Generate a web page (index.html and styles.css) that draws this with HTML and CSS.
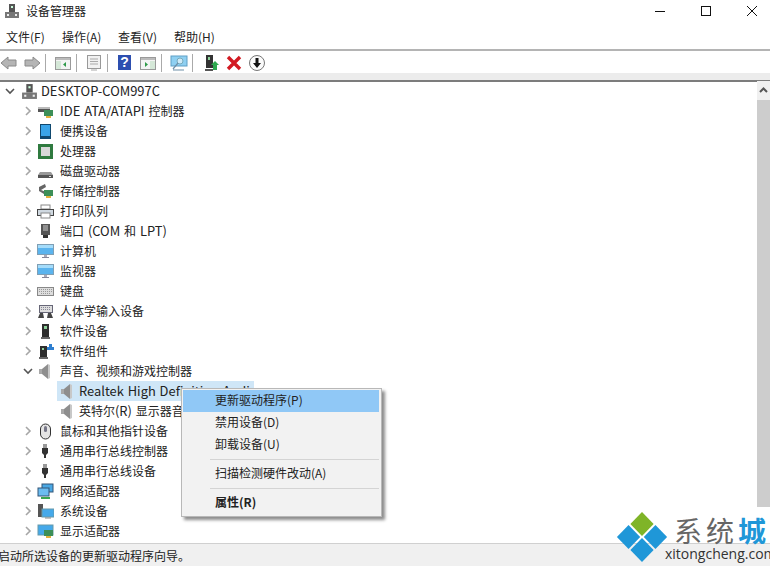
FILE: index.html
```html
<!DOCTYPE html>
<html lang="zh-CN">
<head>
<meta charset="utf-8">
<title>设备管理器</title>
<link rel="stylesheet" href="styles.css">
</head>
<body>
<svg width="0" height="0" class="defs">
  <defs>
    <g id="pc"><rect x="5" y="1" width="6" height="8" fill="#555"/><rect x="7" y="3" width="2" height="2" fill="#cfd"/><rect x="1" y="9" width="14" height="6" fill="#777"/><rect x="3" y="11" width="2" height="2" fill="#eee"/><rect x="11" y="11" width="2" height="2" fill="#eee"/></g>
    <g id="arrow"><path d="M6 4l4 4-4 4" fill="none" stroke="#a6a6a6" stroke-width="1.600"/></g>
    <g id="down"><path d="M4 6l4 4 4-4" fill="none" stroke="#555" stroke-width="1.600"/></g>
    <g id="spk"><path d="M2 6h3v5H2z" fill="#a8a8a8"/><path d="M5 6l6-5v15l-6-5z" fill="#8e8e8e"/><path d="M11 1v15l2-1V2z" fill="#c8c8c8"/></g>
    <g id="mon"><rect x="0.500" y="1.500" width="16" height="10" fill="#5bb4ee" stroke="#7f9fb5"/><rect x="1" y="2" width="15" height="3" fill="#a5dcfa"/><path d="M5 14h7v1H5z" fill="#889"/><path d="M7 12h3v2H7z" fill="#aab"/></g>
    <g id="usb"><path d="M6 1h4v4H6z" fill="#999"/><path d="M5 5h6v5l-2 2v3H7v-3l-2-2z" fill="#333"/></g>
    <g id="card"><rect x="7" y="7" width="9" height="6" fill="#3d8f58"/><rect x="9" y="13" width="5" height="2" fill="#e3b23c"/></g>
  </defs>
</svg>
<div class="window">
  <header class="titlebar">
    <svg class="title-icon" width="16" height="16" viewBox="0 0 16 16"><use href="#pc"/></svg>
    <span class="title-text">设备管理器</span>
    <div class="win-controls">
      <svg width="12" height="12" viewBox="0 0 12 12"><path d="M1 6.500h10" stroke="#111" stroke-width="1"/></svg>
      <svg width="12" height="12" viewBox="0 0 12 12"><rect x="1.500" y="1.500" width="9" height="9" fill="none" stroke="#111"/></svg>
      <svg width="12" height="12" viewBox="0 0 12 12"><path d="M1 1l10 10M11 1L1 11" stroke="#111"/></svg>
    </div>
  </header>
  <nav class="menubar">
    <span class="menu-item">文件(F)</span><span class="menu-item">操作(A)</span><span class="menu-item">查看(V)</span><span class="menu-item">帮助(H)</span>
  </nav>
  <div class="toolbar">
    <svg width="18" height="18" viewBox="0 0 18 18"><path d="M1 9l7-6v3h8v6H8v3z" fill="#b5b5b5" stroke="#8a8a8a"/></svg>
    <svg class="tb-next" width="18" height="18" viewBox="0 0 18 18"><path d="M17 9l-7-6v3H2v6h8v3z" fill="#b5b5b5" stroke="#8a8a8a"/></svg>
    <i class="sep"></i>
    <svg width="18" height="18" viewBox="0 0 18 18"><rect x="1.500" y="3.500" width="15" height="12" fill="#f4f4f4" stroke="#9a9a9a"/><path d="M2 4h14v2H2z" fill="#bbb"/><path d="M2 7h5v8H2z" fill="#d5e8d8"/><path d="M12 8v5l-3-2.500z" fill="#2f9a4a"/></svg>
    <i class="sep"></i>
    <svg width="18" height="18" viewBox="0 0 18 18"><rect x="2.500" y="1.500" width="13" height="13" fill="#f2f2f2" stroke="#999"/><path d="M5 5h8M5 7.500h8M5 10h8" stroke="#aaa"/><path d="M6 16h6" stroke="#aaa"/></svg>
    <i class="sep"></i>
    <svg width="18" height="18" viewBox="0 0 18 18"><rect x="2" y="1" width="13" height="15" fill="#2d4fb0"/><text x="8.500" y="13" class="q">?</text></svg>
    <svg class="tb-next" width="18" height="18" viewBox="0 0 18 18"><rect x="1.500" y="3.500" width="15" height="12" fill="#f4f4f4" stroke="#9a9a9a"/><path d="M2 4h14v2H2z" fill="#bbb"/><path d="M11 7h5v8h-5z" fill="#d5e8d8"/><path d="M6 8v5l3-2.500z" fill="#2f9a4a"/></svg>
    <i class="sep"></i>
    <svg width="18" height="18" viewBox="0 0 18 18"><rect x="1" y="2" width="16" height="10" fill="#8fd0f2" stroke="#5f9fc5"/><circle cx="10" cy="7" r="3" fill="#cfeaf8" stroke="#7ab"/><path d="M8 9l-5 6M3 16h11" stroke="#6f8fa8" stroke-width="1.200"/></svg>
    <i class="sep sep-wide"></i>
    <svg width="18" height="18" viewBox="0 0 18 18"><rect x="4" y="1" width="7" height="13" fill="#333"/><rect x="6" y="3" width="2" height="3" fill="#8ed19a"/><path d="M3 15h8v2H3z" fill="#555"/><path d="M13 7l4 4h-2v5h-4v-5H9z" fill="#2ea84f"/></svg>
    <svg class="tb-next" width="18" height="18" viewBox="0 0 18 18"><path d="M3 3l12 12M15 3L3 15" stroke="#d21a22" stroke-width="3.400"/></svg>
    <svg class="tb-next" width="18" height="18" viewBox="0 0 18 18"><circle cx="9" cy="9" r="7.500" fill="#fafafa" stroke="#777"/><path d="M7.500 4h3v5h2.500L9 14 5 9h2.500z" fill="#111"/></svg>
  </div>
  <div class="band"></div>
  <main class="content">
    <div class="tree">
      <div class="row root"><svg class="tw" viewBox="0 0 16 16"><use href="#down"/></svg><svg class="ic" viewBox="0 0 16 16"><use href="#pc"/></svg><span class="lat">DESKTOP-COM997C</span></div>
      <div class="row"><svg class="tw" viewBox="0 0 16 16"><use href="#arrow"/></svg><svg class="ic" viewBox="0 0 17 17"><rect x="1" y="4" width="12" height="5" fill="#555"/><rect x="1" y="4" width="12" height="2" fill="#bbb"/><use href="#card"/></svg><span><span class="lat">IDE ATA/ATAPI </span>控制器</span></div>
      <div class="row"><svg class="tw" viewBox="0 0 16 16"><use href="#arrow"/></svg><svg class="ic" viewBox="0 0 17 17"><rect x="3" y="1" width="11" height="15" fill="#10486e"/><rect x="4" y="2" width="9" height="11" fill="#3aa4e8"/></svg><span>便携设备</span></div>
      <div class="row"><svg class="tw" viewBox="0 0 16 16"><use href="#arrow"/></svg><svg class="ic" viewBox="0 0 17 17"><rect x="1" y="1" width="15" height="15" fill="#2f7a3f"/><rect x="4" y="4" width="9" height="9" fill="#d8d8d8"/></svg><span>处理器</span></div>
      <div class="row"><svg class="tw" viewBox="0 0 16 16"><use href="#arrow"/></svg><svg class="ic" viewBox="0 0 17 17"><path d="M3 9h11l2 3v3H1v-3z" fill="#999"/><rect x="1" y="12" width="15" height="3" fill="#555"/><rect x="12" y="13" width="2" height="1" fill="#ddd"/></svg><span>磁盘驱动器</span></div>
      <div class="row"><svg class="tw" viewBox="0 0 16 16"><use href="#arrow"/></svg><svg class="ic" viewBox="0 0 17 17"><path d="M2 4l6-3 1 3-5 3 5 2-2 2-5-3z" fill="#666"/><use href="#card"/></svg><span>存储控制器</span></div>
      <div class="row"><svg class="tw" viewBox="0 0 16 16"><use href="#arrow"/></svg><svg class="ic" viewBox="0 0 17 17"><rect x="4" y="2" width="9" height="4" fill="#fff" stroke="#888"/><rect x="0.500" y="6.500" width="16" height="6" fill="#cfd8e0" stroke="#444"/><rect x="4" y="10" width="9" height="5" fill="#fff" stroke="#888"/></svg><span>打印队列</span></div>
      <div class="row"><svg class="tw" viewBox="0 0 16 16"><use href="#arrow"/></svg><svg class="ic" viewBox="0 0 17 17"><rect x="4" y="1" width="9" height="11" fill="#555"/><path d="M6 3h5M6 5h5M6 7h5" stroke="#ccc"/><path d="M6 12h5v3H6z" fill="#333"/></svg><span>端口<span class="lat"> (COM </span>和<span class="lat"> LPT)</span></span></div>
      <div class="row"><svg class="tw" viewBox="0 0 16 16"><use href="#arrow"/></svg><svg class="ic" viewBox="0 0 17 17"><use href="#mon"/></svg><span>计算机</span></div>
      <div class="row"><svg class="tw" viewBox="0 0 16 16"><use href="#arrow"/></svg><svg class="ic" viewBox="0 0 17 17"><use href="#mon"/></svg><span>监视器</span></div>
      <div class="row"><svg class="tw" viewBox="0 0 16 16"><use href="#arrow"/></svg><svg class="ic" viewBox="0 0 17 17"><rect x="0.500" y="4.500" width="16" height="8" fill="#ddd" stroke="#888"/><path d="M2 6.500h13M2 8.500h13M4 10.500h9" stroke="#999" stroke-dasharray="1 1"/></svg><span>键盘</span></div>
      <div class="row"><svg class="tw" viewBox="0 0 16 16"><use href="#arrow"/></svg><svg class="ic" viewBox="0 0 17 17"><rect x="2.500" y="2.500" width="13" height="7" fill="#ddd" stroke="#667"/><path d="M4 4.500h10M4 6.500h10" stroke="#889" stroke-dasharray="1 1"/><path d="M1 15l2-5h3l1 5zM10 15l1-5h3l2 5z" fill="#444"/></svg><span>人体学输入设备</span></div>
      <div class="row"><svg class="tw" viewBox="0 0 16 16"><use href="#arrow"/></svg><svg class="ic" viewBox="0 0 17 17"><rect x="5" y="1" width="7" height="13" fill="#2e2e2e"/><rect x="7" y="3" width="3" height="3" fill="#8ed19a"/><path d="M4 14h9v2H4z" fill="#666"/></svg><span>软件设备</span></div>
      <div class="row"><svg class="tw" viewBox="0 0 16 16"><use href="#arrow"/></svg><svg class="ic" viewBox="0 0 17 17"><rect x="3" y="3" width="7" height="11" fill="#2e2e2e"/><rect x="5" y="5" width="2" height="2" fill="#8ed19a"/><path d="M2 14h9v2H2z" fill="#666"/><path d="M10 4h2V1h3v3h2v3h-7z" fill="#2f7fd0"/></svg><span>软件组件</span></div>
      <div class="row"><svg class="tw" viewBox="0 0 16 16"><use href="#down"/></svg><svg class="ic" viewBox="0 0 17 17"><use href="#spk"/></svg><span>声音、视频和游戏控制器</span></div>
      <div class="row child"><div class="sel"><svg class="ic" viewBox="0 0 17 17"><use href="#spk"/></svg><span class="lat">Realtek High Definition Audio</span></div></div>
      <div class="row child"><div class="unsel"><svg class="ic" viewBox="0 0 17 17"><use href="#spk"/></svg><span>英特尔<span class="lat">(R) </span>显示器音频</span></div></div>
      <div class="row"><svg class="tw" viewBox="0 0 16 16"><use href="#arrow"/></svg><svg class="ic" viewBox="0 0 17 17"><rect x="3.500" y="1" width="10" height="15" rx="5" fill="#e4e4e4" stroke="#333"/><rect x="7" y="3" width="3" height="6" rx="1.500" fill="#778"/></svg><span>鼠标和其他指针设备</span></div>
      <div class="row"><svg class="tw" viewBox="0 0 16 16"><use href="#arrow"/></svg><svg class="ic" viewBox="0 0 17 17"><use href="#usb"/></svg><span>通用串行总线控制器</span></div>
      <div class="row"><svg class="tw" viewBox="0 0 16 16"><use href="#arrow"/></svg><svg class="ic" viewBox="0 0 17 17"><use href="#usb"/></svg><span>通用串行总线设备</span></div>
      <div class="row"><svg class="tw" viewBox="0 0 16 16"><use href="#arrow"/></svg><svg class="ic" viewBox="0 0 17 17"><rect x="5" y="1" width="11" height="8" fill="#4aa8e4" stroke="#357"/><rect x="1" y="5" width="11" height="8" fill="#6bbcf0" stroke="#357"/><path d="M4 15h9" stroke="#3aa64f" stroke-width="2"/></svg><span>网络适配器</span></div>
      <div class="row"><svg class="tw" viewBox="0 0 16 16"><use href="#arrow"/></svg><svg class="ic" viewBox="0 0 17 17"><rect x="1" y="1" width="5" height="13" fill="#555"/><rect x="5" y="6" width="12" height="8" fill="#45a9ea" stroke="#69a"/><path d="M8 15h6" stroke="#888"/></svg><span>系统设备</span></div>
      <div class="row"><svg class="tw" viewBox="0 0 16 16"><use href="#arrow"/></svg><svg class="ic" viewBox="0 0 17 17"><rect x="1" y="2" width="15" height="10" fill="#45a9ea" stroke="#69a"/><use href="#card"/></svg><span>显示适配器</span></div>
    </div>
    <div class="scrollbar">
      <div class="sb-btn"><svg width="9" height="7" viewBox="0 0 9 7"><path d="M1 5l3.500-3.500L8 5" fill="none" stroke="#555" stroke-width="2"/></svg></div>
      <div class="sb-thumb"></div>
    </div>
  </main>
  <footer class="status">启动所选设备的更新驱动程序向导。</footer>
</div>
<div class="ctx">
  <div class="ctx-item hot">更新驱动程序(P)</div>
  <div class="ctx-item">禁用设备(D)</div>
  <div class="ctx-item">卸载设备(U)</div>
  <hr>
  <div class="ctx-item">扫描检测硬件改动(A)</div>
  <hr>
  <div class="ctx-item bold">属性(R)</div>
</div>
<div class="logo">
  <svg class="logo-mark" width="52" height="50" viewBox="0 0 58 50" preserveAspectRatio="none"><path d="M29 0l13 12-13 12-13-12z" fill="#7fb428"/><path d="M14 13l13 12-13 12L1 25z" fill="#1f97d8"/><path d="M44 13l13 12-13 12-13-12z" fill="#1f97d8"/><path d="M29 26l13 12-13 12-13-12z" fill="#1f97d8"/></svg>
  <div class="logo-text">
    <div class="logo-cn">系统<b>城</b></div>
    <div class="logo-en">xitongcheng.com</div>
  </div>
</div>
</body>
</html>
```
FILE: styles.css
```css
* { box-sizing: border-box; }
html, body { margin: 0; padding: 0; width: 770px; height: 566px; overflow: hidden; background: #fff; }
body { font: 12px "Noto Sans CJK SC", "Liberation Sans", sans-serif; color: #222; position: relative; }
.defs { position: absolute; }
.window { width: 770px; height: 566px; display: flex; flex-direction: column; }
.titlebar { height: 26px; display: flex; align-items: center; padding: 0 0 5px 4px; flex: none; }
.title-icon { margin-right: 6px; }
.title-text { font-size: 12px; }
.win-controls { margin-left: auto; display: flex; gap: 34px; padding-right: 12px; margin-top: 0; }
.menubar { height: 25px; border-bottom: 2px solid #b4b4b4; display: flex; gap: 16px; padding: 0 0 3px 6px; align-items: center; flex: none; font-size: 12px; }
.menu-item { width: 40px; white-space: nowrap; }
.toolbar { height: 22px; display: flex; align-items: center; padding-top: 2px; flex: none; }
.toolbar svg { flex: none; }
.tb-next { margin-left: 5px; }
.sep { width: 1px; height: 18px; background: #aaa; margin: 0 8px 0 4px; }
.sep-wide { margin-right: 9px; }
.band { height: 9px; background: #ececec; border-bottom: 2px solid #7c7c7c; flex: none; }
.content { flex: 1; display: flex; min-height: 0; margin-top: -1px; }
.tree { flex: 1; overflow: hidden; }
.row { height: 20px; display: flex; align-items: center; padding-left: 21px; white-space: nowrap; }
.row.root { padding-left: 2px; }
.row.child { padding-left: 57px; }
.tw { width: 16px; height: 16px; flex: none; margin-right: 1px; }
.ic { width: 17px; height: 17px; flex: none; margin-right: 6px; }
.root .ic { margin-left: 2px; margin-right: 3px; }
.row:not(.root) .tw { margin-left: -1px; }
.row span { line-height: 20px; }
.row .lat { font-size: 12.9px; word-spacing: 1px; white-space: pre; }
.sel, .unsel { display: flex; align-items: center; height: 20px; padding-left: 2px; width: 197px; overflow: hidden; }
.sel .ic, .unsel .ic { margin-right: 3px; }
.sel { background: #cfe6f7; }
.scrollbar { width: 13px; flex: none; display: flex; flex-direction: column; }
.sb-btn { height: 19px; flex: none; background: #f0f0f0; display: flex; align-items: center; justify-content: center; }
.sb-thumb { height: 407px; flex: none; background: #cdcdcd; }
.status { height: 23px; flex: none; background: #f0f0f0; border-top: 1px solid #d0d0d0; line-height: 23px; font-size: 12px; white-space: nowrap; padding-left: 0; text-indent: -2px; overflow: hidden; }
.ctx { position: absolute; left: 181px; top: 388px; width: 201px; height: 129px; background: #f2f2f2; border: 1px solid #b8b8b8; box-shadow: 3px 3px 3px rgba(0,0,0,.45); padding: 1px 2px 1px 1px; }
.ctx-item { height: 22px; line-height: 20px; padding-left: 32px; font-size: 12px; white-space: nowrap; }
.ctx-item.hot { background: #90c8f6; }
.ctx-item.bold { font-weight: 700; }
.ctx hr { border: 0; height: 1px; background: #d4d4d4; margin: 3px 0 3px 27px; }
.logo { position: absolute; left: 616px; top: 512px; display: flex; }
.logo-text { margin-left: 6px; margin-top: 3px; }
.logo-cn { font-size: 28px; line-height: 31px; color: #666; letter-spacing: 4px; white-space: nowrap; }
.logo-cn b { color: #1f97d8; font-weight: 700; }
.logo-en { font: 14px/15px "Open Sans", sans-serif; color: #333; margin-left: -9px; white-space: nowrap; }
.q { font: 700 14px "Liberation Sans", sans-serif; fill: #fff; text-anchor: middle; }
```
